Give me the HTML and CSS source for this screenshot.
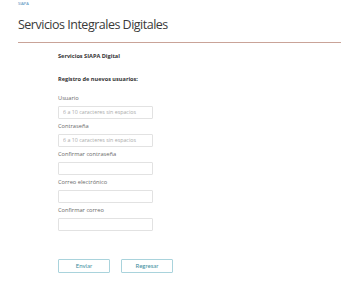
FILE: index.html
```html
<!DOCTYPE html>
<html lang="es">
<head>
    <meta charset="UTF-8">
    <meta name="viewport" content="width=device-width, initial-scale=1.0">
    <title>Servicios Integrales Digitales</title>
    <link rel="stylesheet" href="styles.css">
</head>
<body>
    <div class="top">SIAPA</div>
    <div class="header">
        <h1>Servicios Integrales Digitales</h1>
    </div>

    <div class="content">
        <h2>Servicios SIAPA Digital</h2>
        <h3>Registro de nuevos usuarios:</h3>

        <div class="field">
            <label>Usuario</label>
            <input type="text" placeholder="6 a 10 caracteres sin espacios">
        </div>
        <div class="field">
            <label>Contraseña</label>
            <input type="password" placeholder="6 a 10 caracteres sin espacios">
        </div>
        <div class="field">
            <label>Confirmar contraseña</label>
            <input type="password">
        </div>
        <div class="field">
            <label>Correo electrónico</label>
            <input type="text">
        </div>
        <div class="field">
            <label>Confirmar correo</label>
            <input type="text">
        </div>

        <div class="actions">
            <button class="button">Enviar</button>
            <button class="button">Regresar</button>
        </div>
    </div>
</body>
</html>
```

FILE: styles.css
```css
body {
    margin: 0;
    font-family: 'Open Sans', 'Noto Sans', sans-serif;
    background: #fff;
    color: #444;
}
.top {
    padding: 1px 0 0 18px;
    font-size: 4px;
    line-height: 6px;
    color: #3b7fb5;
}
.header {
    margin: 0 4px 0 18px;
    border-bottom: 1px solid #c9a398;
    padding-bottom: 6px;
}
.header h1 {
    margin: 0;
    padding-top: 7px;
    font-size: 12.5px;
    font-weight: 400;
    letter-spacing: -0.5px;
    line-height: 22px;
    color: #3a3a3a;
}
.content {
    padding-left: 58px;
}
.content h2 {
    margin: 8px 0 0;
    font-size: 5.6px;
    line-height: 10px;
    font-weight: 700;
    color: #333;
}
.content h3 {
    margin: 13px 0 0;
    font-size: 5.6px;
    line-height: 10px;
    font-weight: 700;
    color: #333;
}
.field {
    margin-top: 3.5px;
}
.content h3 + .field {
    margin-top: 10px;
}
.field label {
    display: block;
    font-size: 5.7px;
    line-height: 9px;
    color: #6a6a6a;
}
.field input {
    display: block;
    box-sizing: border-box;
    width: 95px;
    height: 13px;
    margin-top: 2.5px;
    padding: 0 4px;
    border: 1px solid #e2e2e2;
    border-radius: 1px;
    font-family: 'Open Sans', sans-serif;
    font-size: 5.3px;
    color: #555;
    background: #fff;
}
.field input::placeholder {
    color: #aaa;
}
.actions {
    margin-top: 28px;
    display: flex;
    gap: 11px;
}
.button {
    box-sizing: border-box;
    width: 52px;
    height: 14px;
    padding: 0;
    border: 1px solid #a9d3dc;
    border-radius: 1px;
    background: #fff;
    color: #3c8e9e;
    font-family: 'Lato', sans-serif;
    font-size: 6px;
}
```
